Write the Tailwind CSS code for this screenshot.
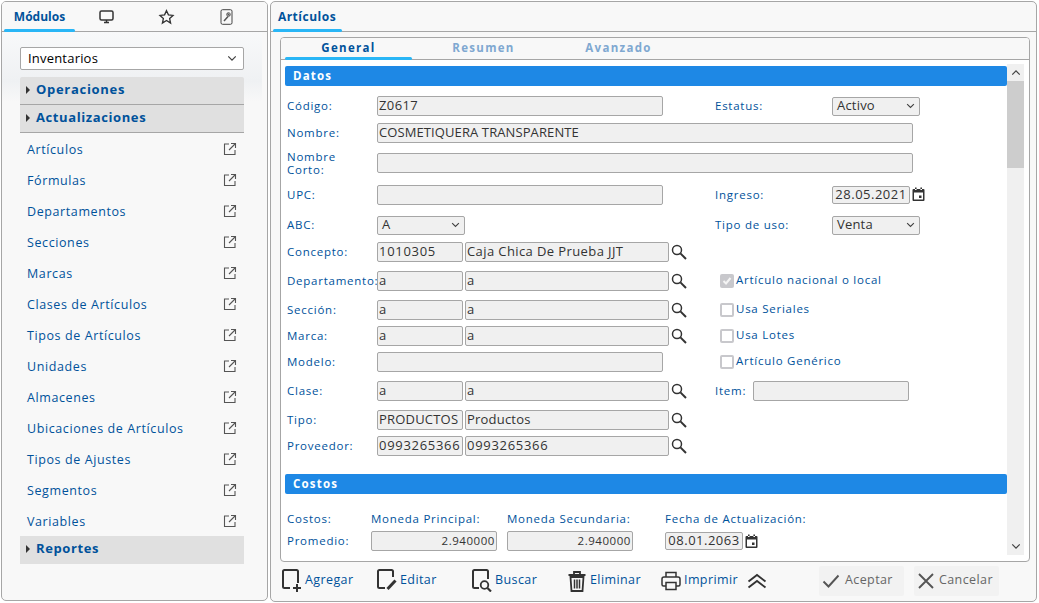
<!DOCTYPE html>
<html lang="es">
<head>
<meta charset="UTF-8">
<title>Artículos</title>
<script src="https://cdn.jsdelivr.net/npm/@tailwindcss/browser@4"></script>
</head>
<body class="bg-white font-['Open_Sans',sans-serif] text-[12px] text-[#00529b] w-[1039px] h-[603px] overflow-hidden">
<svg class="hidden">
  <symbol id="ext" viewBox="0 0 14 14"><path d="M6 2H1.500v10.500H12V8M8 1.500h4.500V6M12.500 1.500L6 8" fill="none" stroke="#555" stroke-width="1.100"/></symbol>
  <symbol id="lupa" viewBox="0 0 16 16"><circle cx="6" cy="6" r="4.500" fill="none" stroke="#333" stroke-width="1.500"/><path d="M9.400 9.400L15 15" stroke="#333" stroke-width="2"/></symbol>
  <symbol id="cal" viewBox="0 0 13 14"><path d="M1.500 2h10a1 1 0 0 1 1 1v10a1 1 0 0 1-1 1h-10a1 1 0 0 1-1-1V3a1 1 0 0 1 1-1zM3 .5h1.600V3H3zM8.400.5H10V3H8.400zM2 5.500v7h9v-7zM7 8.500h2.500V11H7z" fill="#333" fill-rule="evenodd"/></symbol>
  <symbol id="chev" viewBox="0 0 12 8"><path d="M1.500 1.500L6 6l4.500-4.500" fill="none" stroke="#444" stroke-width="1.500"/></symbol>
</svg>
<div class="flex h-full pt-px pl-px gap-[2px]">

  <!-- Modulos -->
  <aside class="w-[267px] h-[600px] border border-[#a6a6a6] rounded-[5px] bg-[#f8f8f8] flex flex-col overflow-hidden">
    <div class="h-[30px] flex border-b border-[#a6a6a6] bg-[#f8f8f8] shrink-0">
      <div class="relative w-[73px] flex items-center justify-center font-bold text-[#00529b] pt-[1px] pl-[2px]">Módulos
        <span class="absolute left-[2px] right-0 bottom-[-1px] h-[3px] rounded-[2px] bg-[#29b6f6]"></span></div>
      <div class="w-[60px] flex items-center justify-center pl-[2px]">
        <svg width="15" height="14" viewBox="0 0 15 14"><rect x="1" y="1" width="13" height="9" rx="1.500" fill="none" stroke="#333" stroke-width="1.500"/><path d="M5 12.500h5M7.500 10v2" stroke="#333" stroke-width="1.500"/></svg></div>
      <div class="w-[60px] flex items-center justify-center pl-[2px]">
        <svg width="17" height="16" viewBox="0 0 24 24"><path d="M12 2.500l2.900 6.300 6.900.8-5.100 4.700 1.400 6.800L12 17.200l-6.100 3.900 1.400-6.800L2.200 9.600l6.900-.8z" fill="none" stroke="#333" stroke-width="2"/></svg></div>
      <div class="w-[60px] flex items-center justify-center pl-[2px]">
        <svg width="13" height="16" viewBox="0 0 13 16"><rect x="1" y=".7" width="11" height="14.600" rx="1.500" fill="none" stroke="#444"/><path d="M4 12l4-4.500M7.500 4.500l2 2" stroke="#555" stroke-width="1.500"/><circle cx="8.500" cy="5.500" r="1.800" fill="none" stroke="#555"/></svg></div>
    </div>
    <div class="flex-1 pl-[18px] w-[242px] box-content pt-[15px] bg-gradient-to-b from-[#f8f9fa] via-[#eff1f3] via-70% to-[#f8f8f8] bg-[length:100%_70px] bg-no-repeat">
      <div class="w-[224px]">
      <div class="h-[23px] flex items-center justify-between border border-[#a6a6a6] rounded-[2px] bg-white pl-[7px] pr-[6px] text-[13px] text-black tracking-[0.2px]">Inventarios
        <svg width="10" height="7"><use href="#chev"/></svg></div>
      <div class="mt-[7px] h-[28px] bg-[#e0e0e0] border-b border-[#a6a6a6] rounded-t-[2px] flex items-center gap-[6px] pl-[6px] font-bold text-[13px] tracking-[0.7px] pb-[2px]"><span class="w-0 h-0 border-y-[4px] border-y-transparent border-l-[4px] border-l-[#333]"></span>Operaciones</div>
      <div class="h-[28px] bg-[#e0e0e0] border-b border-[#a6a6a6] flex items-center gap-[6px] pl-[6px] font-bold text-[13px] tracking-[0.6px] pb-[2px]"><span class="w-0 h-0 border-y-[4px] border-y-transparent border-l-[4px] border-l-[#333]"></span>Actualizaciones</div>
      <ul class="pl-[7px] pr-[7px] text-[12.500px] tracking-[0.6px]">
        <li class="h-[31px] pt-[4px] flex items-center justify-between">Artículos<svg class="mb-[4px]" width="14" height="14"><use href="#ext"/></svg></li>
        <li class="h-[31px] pt-[4px] flex items-center justify-between">Fórmulas<svg class="mb-[4px]" width="14" height="14"><use href="#ext"/></svg></li>
        <li class="h-[31px] pt-[4px] flex items-center justify-between">Departamentos<svg class="mb-[4px]" width="14" height="14"><use href="#ext"/></svg></li>
        <li class="h-[31px] pt-[4px] flex items-center justify-between">Secciones<svg class="mb-[4px]" width="14" height="14"><use href="#ext"/></svg></li>
        <li class="h-[31px] pt-[4px] flex items-center justify-between">Marcas<svg class="mb-[4px]" width="14" height="14"><use href="#ext"/></svg></li>
        <li class="h-[31px] pt-[4px] flex items-center justify-between">Clases de Artículos<svg class="mb-[4px]" width="14" height="14"><use href="#ext"/></svg></li>
        <li class="h-[31px] pt-[4px] flex items-center justify-between">Tipos de Artículos<svg class="mb-[4px]" width="14" height="14"><use href="#ext"/></svg></li>
        <li class="h-[31px] pt-[4px] flex items-center justify-between">Unidades<svg class="mb-[4px]" width="14" height="14"><use href="#ext"/></svg></li>
        <li class="h-[31px] pt-[4px] flex items-center justify-between">Almacenes<svg class="mb-[4px]" width="14" height="14"><use href="#ext"/></svg></li>
        <li class="h-[31px] pt-[4px] flex items-center justify-between">Ubicaciones de Artículos<svg class="mb-[4px]" width="14" height="14"><use href="#ext"/></svg></li>
        <li class="h-[31px] pt-[4px] flex items-center justify-between">Tipos de Ajustes<svg class="mb-[4px]" width="14" height="14"><use href="#ext"/></svg></li>
        <li class="h-[31px] pt-[4px] flex items-center justify-between">Segmentos<svg class="mb-[4px]" width="14" height="14"><use href="#ext"/></svg></li>
        <li class="h-[31px] pt-[4px] flex items-center justify-between">Variables<svg class="mb-[4px]" width="14" height="14"><use href="#ext"/></svg></li>
      </ul>
      <div class="h-[28px] bg-[#e0e0e0] flex items-center gap-[6px] pl-[6px] font-bold text-[13px] tracking-[0.6px] pb-[3px]"><span class="w-0 h-0 border-y-[4px] border-y-transparent border-l-[4px] border-l-[#333]"></span>Reportes</div>
      </div>
    </div>
  </aside>

  <!-- Articulos -->
  <main class="w-[767px] h-[601px] border border-[#a6a6a6] rounded-[5px] bg-[#f8f8f8] flex flex-col overflow-hidden">
    <div class="h-[30px] border-b border-[#a6a6a6] flex shrink-0">
      <div class="relative w-[71px] flex items-center justify-center font-bold tracking-[0.5px] pt-[1px] pl-[1px]">Artículos
        <span class="absolute left-[2px] right-0 bottom-[-1px] h-[3px] rounded-[2px] bg-[#29b6f6]"></span></div>
    </div>
    <div class="ml-[9px] mt-[5px] w-[750px] h-[525px] border border-[#a6a6a6] rounded-[4px] bg-white flex flex-col overflow-hidden shrink-0">
      <div class="h-[22px] border-b border-[#a6a6a6] bg-[#f8f8f8] flex font-bold text-[11.500px] tracking-[1.300px] shrink-0">
        <div class="relative w-[127px] ml-[4px] flex items-center justify-center pb-[2px]">General
          <span class="absolute left-0 right-0 bottom-[-1px] h-[3px] rounded-[2px] bg-[#29b6f6]"></span></div>
        <div class="w-[143px] flex items-center justify-center pb-[2px] text-[#7fa8d1]">Resumen</div>
        <div class="w-[127px] flex items-center justify-center pb-[2px] text-[#7fa8d1]">Avanzado</div>
      </div>
      <div class="flex flex-1 min-h-0 pt-[4px] pl-[4px] pr-[5px]">
        <div class="w-[722px] overflow-hidden tracking-[0.75px] text-[11.500px]">
          <div class="mt-[2px] h-[20px] bg-[#1e88e5] rounded-[2px] text-white font-bold flex items-center pl-[8px] pb-[1px] tracking-[1.200px]">Datos</div>

          <!-- Codigo / Estatus -->
          <div class="mt-[10px] h-[20px] flex items-center pl-[2px]">
            <span class="w-[90px]">Código:</span>
            <div class="w-[286px] h-[20px] border border-[#a6a6a6] rounded-[2px] bg-[#f0f0f0] pl-[1px] flex items-center text-[13px] text-[#333] tracking-[0.4px]">Z0617</div>
            <span class="ml-[52px] w-[117px]">Estatus:</span>
            <div class="w-[88px] h-[19px] border border-[#a6a6a6] rounded-[2px] bg-[#f0f0f0] px-[4px] flex items-center justify-between text-[13px] text-[#333] tracking-[0.2px]">Activo<svg width="9" height="6"><use href="#chev"/></svg></div>
          </div>
          <div class="mt-[7px] h-[20px] flex items-center pl-[2px]">
            <span class="w-[90px]">Nombre:</span>
            <div class="w-[536px] h-[20px] border border-[#a6a6a6] rounded-[2px] bg-[#f0f0f0] pl-[1px] flex items-center text-[13px] text-[#333] tracking-[0.1px]">COSMETIQUERA TRANSPARENTE</div>
          </div>
          <div class="mt-[10px] h-[20px] flex items-center pl-[2px]">
            <span class="w-[90px] leading-[13px]">Nombre<br>Corto:</span>
            <div class="w-[536px] h-[20px] border border-[#a6a6a6] rounded-[2px] bg-[#f0f0f0]"></div>
          </div>
          <div class="mt-[12px] h-[20px] flex items-center pl-[2px]">
            <span class="w-[90px]">UPC:</span>
            <div class="w-[286px] h-[20px] border border-[#a6a6a6] rounded-[2px] bg-[#f0f0f0]"></div>
            <span class="ml-[52px] w-[117px]">Ingreso:</span>
            <div class="w-[78px] h-[18px] border border-[#a6a6a6] rounded-[2px] bg-[#f0f0f0] flex items-center justify-center text-[13px] text-[#333] tracking-[0.5px]">28.05.2021</div>
            <svg class="ml-[2px] mb-[2px]" width="13" height="14"><use href="#cal"/></svg>
          </div>
          <div class="mt-[10px] h-[20px] flex items-center pl-[2px]">
            <span class="w-[90px]">ABC:</span>
            <div class="w-[88px] h-[19px] border border-[#a6a6a6] rounded-[2px] bg-[#f0f0f0] px-[4px] flex items-center justify-between text-[13px] text-[#333]">A<svg width="9" height="6"><use href="#chev"/></svg></div>
            <span class="ml-[250px] w-[117px]">Tipo de uso:</span>
            <div class="w-[88px] h-[19px] border border-[#a6a6a6] rounded-[2px] bg-[#f0f0f0] px-[4px] flex items-center justify-between text-[13px] text-[#333] tracking-[0.2px]">Venta<svg width="9" height="6"><use href="#chev"/></svg></div>
          </div>
          <div class="mt-[7px] h-[20px] flex items-center pl-[2px]">
            <span class="w-[90px]">Concepto:</span>
            <div class="w-[86px] h-[20px] border border-[#a6a6a6] rounded-[2px] bg-[#f0f0f0] pl-[1px] flex items-center text-[13px] text-[#333] tracking-[0.7px]">1010305</div>
            <div class="ml-[2px] w-[204px] h-[20px] border border-[#a6a6a6] rounded-[2px] bg-[#f0f0f0] pl-[1px] flex items-center text-[13px] text-[#333] tracking-[0.4px]">Caja Chica De Prueba JJT</div>
            <svg class="ml-[2px]" width="16" height="16"><use href="#lupa"/></svg>
          </div>
          <div class="mt-[9px] h-[20px] flex items-center pl-[2px]">
            <span class="w-[90px]">Departamento:</span>
            <div class="w-[86px] h-[20px] border border-[#a6a6a6] rounded-[2px] bg-[#f0f0f0] pl-[1px] flex items-center text-[13px] text-[#333]">a</div>
            <div class="ml-[2px] w-[204px] h-[20px] border border-[#a6a6a6] rounded-[2px] bg-[#f0f0f0] pl-[1px] flex items-center text-[13px] text-[#333]">a</div>
            <svg class="ml-[2px]" width="16" height="16"><use href="#lupa"/></svg>
            <span class="ml-[33px] w-[14px] h-[14px] rounded-[2px] bg-[#c8c8cc] flex items-center justify-center"><svg width="10" height="10" viewBox="0 0 10 10"><path d="M1.500 5l2.500 2.500L8.500 2" fill="none" stroke="#f4f4f4" stroke-width="2"/></svg></span>
            <span class="ml-[2px] pb-[2px]">Artículo nacional o local</span>
          </div>
          <div class="mt-[9px] h-[20px] flex items-center pl-[2px]">
            <span class="w-[90px]">Sección:</span>
            <div class="w-[86px] h-[20px] border border-[#a6a6a6] rounded-[2px] bg-[#f0f0f0] pl-[1px] flex items-center text-[13px] text-[#333]">a</div>
            <div class="ml-[2px] w-[204px] h-[20px] border border-[#a6a6a6] rounded-[2px] bg-[#f0f0f0] pl-[1px] flex items-center text-[13px] text-[#333]">a</div>
            <svg class="ml-[2px]" width="16" height="16"><use href="#lupa"/></svg>
            <span class="ml-[33px] w-[14px] h-[14px] rounded-[2px] border-2 border-[#c8c8cc] bg-white"></span>
            <span class="ml-[2px] pb-[2px]">Usa Seriales</span>
          </div>
          <div class="mt-[6px] h-[20px] flex items-center pl-[2px]">
            <span class="w-[90px]">Marca:</span>
            <div class="w-[86px] h-[20px] border border-[#a6a6a6] rounded-[2px] bg-[#f0f0f0] pl-[1px] flex items-center text-[13px] text-[#333]">a</div>
            <div class="ml-[2px] w-[204px] h-[20px] border border-[#a6a6a6] rounded-[2px] bg-[#f0f0f0] pl-[1px] flex items-center text-[13px] text-[#333]">a</div>
            <svg class="ml-[2px]" width="16" height="16"><use href="#lupa"/></svg>
            <span class="ml-[33px] w-[14px] h-[14px] rounded-[2px] border-2 border-[#c8c8cc] bg-white"></span>
            <span class="ml-[2px] pb-[2px]">Usa Lotes</span>
          </div>
          <div class="mt-[6px] h-[20px] flex items-center pl-[2px]">
            <span class="w-[90px]">Modelo:</span>
            <div class="w-[286px] h-[20px] border border-[#a6a6a6] rounded-[2px] bg-[#f0f0f0]"></div>
            <span class="ml-[57px] w-[14px] h-[14px] rounded-[2px] border-2 border-[#c8c8cc] bg-white"></span>
            <span class="ml-[2px] pb-[2px]">Artículo Genérico</span>
          </div>
          <div class="mt-[9px] h-[20px] flex items-center pl-[2px]">
            <span class="w-[90px]">Clase:</span>
            <div class="w-[86px] h-[20px] border border-[#a6a6a6] rounded-[2px] bg-[#f0f0f0] pl-[1px] flex items-center text-[13px] text-[#333]">a</div>
            <div class="ml-[2px] w-[204px] h-[20px] border border-[#a6a6a6] rounded-[2px] bg-[#f0f0f0] pl-[1px] flex items-center text-[13px] text-[#333]">a</div>
            <svg class="ml-[2px]" width="16" height="16"><use href="#lupa"/></svg>
            <span class="ml-[28px] w-[38px]">Item:</span>
            <div class="w-[156px] h-[20px] border border-[#a6a6a6] rounded-[2px] bg-[#f0f0f0]"></div>
          </div>
          <div class="mt-[9px] h-[20px] flex items-center pl-[2px]">
            <span class="w-[90px]">Tipo:</span>
            <div class="w-[86px] h-[20px] border border-[#a6a6a6] rounded-[2px] bg-[#f0f0f0] pl-[1px] flex items-center text-[13px] text-[#333] tracking-[0.2px]">PRODUCTOS</div>
            <div class="ml-[2px] w-[204px] h-[20px] border border-[#a6a6a6] rounded-[2px] bg-[#f0f0f0] pl-[1px] flex items-center text-[13px] text-[#333] tracking-[0.2px]">Productos</div>
            <svg class="ml-[2px]" width="16" height="16"><use href="#lupa"/></svg>
          </div>
          <div class="mt-[6px] h-[20px] flex items-center pl-[2px]">
            <span class="w-[90px]">Proveedor:</span>
            <div class="w-[86px] h-[20px] border border-[#a6a6a6] rounded-[2px] bg-[#f0f0f0] pl-[1px] flex items-center text-[13px] text-[#333] tracking-[0.7px] overflow-hidden">0993265366</div>
            <div class="ml-[2px] w-[204px] h-[20px] border border-[#a6a6a6] rounded-[2px] bg-[#f0f0f0] pl-[1px] flex items-center text-[13px] text-[#333] tracking-[0.7px]">0993265366</div>
            <svg class="ml-[2px]" width="16" height="16"><use href="#lupa"/></svg>
          </div>

          <div class="mt-[18px] h-[20px] bg-[#1e88e5] rounded-[2px] text-white font-bold flex items-center pl-[8px] pb-[1px] tracking-[1.200px]">Costos</div>
          <div class="mt-[18px] h-[14px] flex items-center pl-[2px]">
            <span class="w-[84px]">Costos:</span>
            <span class="w-[136px]">Moneda Principal:</span>
            <span class="w-[158px]">Moneda Secundaria:</span>
            <span>Fecha de Actualización:</span>
          </div>
          <div class="mt-[5px] h-[20px] flex items-center pl-[2px]">
            <span class="w-[84px]">Promedio:</span>
            <div class="w-[126px] h-[20px] border border-[#a6a6a6] rounded-[2px] bg-[#f0f0f0] pr-[1px] flex items-center justify-end text-[11.500px] text-[#333] tracking-[0.55px]">2.940000</div>
            <div class="ml-[10px] w-[126px] h-[20px] border border-[#a6a6a6] rounded-[2px] bg-[#f0f0f0] pr-[1px] flex items-center justify-end text-[11.500px] text-[#333] tracking-[0.55px]">2.940000</div>
            <div class="ml-[32px] w-[78px] h-[18px] border border-[#a6a6a6] rounded-[2px] bg-[#f0f0f0] flex items-center justify-center text-[13px] text-[#333] tracking-[0.5px]">08.01.2063</div>
            <svg class="ml-[2px]" width="13" height="14"><use href="#cal"/></svg>
          </div>
        </div>
        <div class="w-[17px] h-[491px] bg-[#f0f0f0] flex flex-col items-center justify-between shrink-0 relative">
          <svg class="mt-[5px] rotate-180" width="10" height="7"><use href="#chev"/></svg>
          <div class="absolute top-[17px] left-0 w-full h-[87px] bg-[#cdcdcd]"></div>
          <svg class="mb-[5px]" width="10" height="7"><use href="#chev"/></svg>
        </div>
      </div>
    </div>

    <!-- Barra de acciones -->
    <div class="flex-1 flex items-center pl-[11px] pb-[2px] text-[12.500px] tracking-[0.4px]">
      <div class="w-[95px] flex items-center gap-[3px]">
        <svg width="20" height="23" viewBox="0 0 20 23"><path d="M8 19H2.500a1.500 1.500 0 0 1-1.500-1.500v-15A1.500 1.500 0 0 1 2.500 1h12A1.500 1.500 0 0 1 16 2.500V14" fill="none" stroke="#333" stroke-width="2"/><path d="M15 15v8M11 19h8" stroke="#333" stroke-width="2"/></svg>Agregar</div>
      <div class="w-[95px] flex items-center gap-[3px]">
        <svg width="20" height="23" viewBox="0 0 20 23"><path d="M8 19H2.500a1.500 1.500 0 0 1-1.500-1.500v-15A1.500 1.500 0 0 1 2.500 1h12A1.500 1.500 0 0 1 16 2.500V8" fill="none" stroke="#333" stroke-width="2"/><path d="M10.500 20l8-8.500" stroke="#333" stroke-width="3"/></svg>Editar</div>
      <div class="w-[95px] flex items-center gap-[3px]">
        <svg width="20" height="23" viewBox="0 0 20 23"><path d="M7 19H2.500a1.500 1.500 0 0 1-1.500-1.500v-15A1.500 1.500 0 0 1 2.500 1h12A1.500 1.500 0 0 1 16 2.500V10" fill="none" stroke="#333" stroke-width="2"/><circle cx="12.500" cy="16" r="3.800" fill="none" stroke="#333" stroke-width="1.800"/><path d="M15.500 19l3.500 3.500" stroke="#333" stroke-width="2.200"/></svg>Buscar</div>
      <div class="w-[94px] flex items-center gap-[3px]">
        <svg width="20" height="22" viewBox="0 0 20 22"><path d="M1.500 5h17M7 5V2h6v3" fill="none" stroke="#333" stroke-width="1.800"/><path d="M3.500 7h13l-1 14h-11z" fill="none" stroke="#333" stroke-width="1.800"/><path d="M7.500 9.500v9M10 9.500v9M12.500 9.500v9" stroke="#333" stroke-width="1.500"/></svg>Eliminar</div>
      <div class="w-[87px] flex items-center gap-[3px]">
        <svg width="20" height="20" viewBox="0 0 20 20"><path d="M5 6V1.500h10V6M5 15H2.500a1.500 1.500 0 0 1-1.500-1.500V8a2 2 0 0 1 2-2h14a2 2 0 0 1 2 2v5.500a1.500 1.500 0 0 1-1.500 1.500H15" fill="none" stroke="#333" stroke-width="1.500"/><path d="M5 11.500h10v7H5z" fill="none" stroke="#333" stroke-width="1.500"/></svg>Imprimir</div>
      <svg class="-ml-[1px]" width="20" height="16" viewBox="0 0 20 16"><path d="M1.500 8.500L10 2l8.500 6.500M1.500 14.500L10 8l8.500 6.500" fill="none" stroke="#333" stroke-width="1.900"/></svg>
      <div class="ml-[52px] w-[85px] h-[30px] bg-[#f2f2f2] rounded-[2px] flex items-center gap-[5px] pl-[3px] text-[#666]">
        <svg width="18" height="14" viewBox="0 0 18 14"><path d="M1.500 7.500L6.500 12.500 16.500 1.500" fill="none" stroke="#555" stroke-width="1.900"/></svg>Aceptar</div>
      <div class="ml-[10px] w-[85px] h-[30px] bg-[#f2f2f2] rounded-[2px] flex items-center gap-[5px] pl-[4px] text-[#666]">
        <svg width="16" height="16" viewBox="0 0 16 16"><path d="M1 1l14 14M15 1L1 15" fill="none" stroke="#555" stroke-width="1.900"/></svg>Cancelar</div>
    </div>
  </main>
</div>
</body>
</html>
